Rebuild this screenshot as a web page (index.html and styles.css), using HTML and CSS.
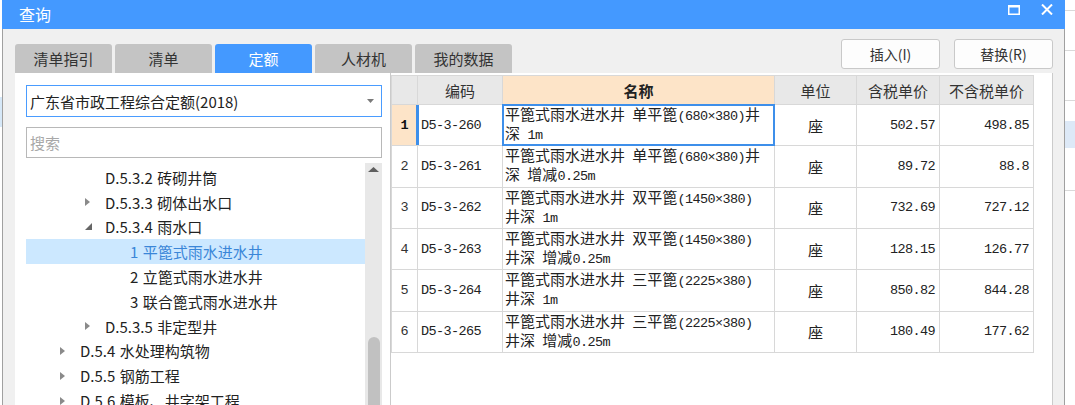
FILE: index.html
```html
<!DOCTYPE html>
<html lang="zh-CN">
<head>
<meta charset="utf-8">
<title>查询</title>
<link rel="stylesheet" href="styles.css">
</head>
<body>
<div class="desk-left"><div class="desk-band"></div></div>
<div class="window">
  <div class="titlebar">
    <div class="title">查询</div>
    <div class="win-ctrls">
      <svg class="ic-max" width="12" height="10" viewBox="0 0 12 10"><path d="M0 0H12V10H0Z M1.5 2.5V8.5H10.5V2.5Z" fill="#fff" fill-rule="evenodd"/></svg>
      <svg class="ic-close" width="12" height="11" viewBox="0 0 12 11"><path d="M1 0.5L11 10.5M11 0.5L1 10.5" stroke="#fff" stroke-width="2" fill="none"/></svg>
    </div>
  </div>
  <div class="frame-body">
    <div class="topbar">
      <div class="tabs">
        <div class="tab">清单指引</div>
        <div class="tab">清单</div>
        <div class="tab active">定额</div>
        <div class="tab">人材机</div>
        <div class="tab">我的数据</div>
      </div>
      <div class="actions">
        <button class="btn">插入(I)</button>
        <button class="btn">替换(R)</button>
      </div>
    </div>
    <div class="main">
      <div class="left">
        <div class="combo">
          <span>广东省市政工程综合定额(2018)</span>
          <svg class="combo-arrow" width="7" height="4" viewBox="0 0 7 4"><path d="M0 0H7L3.5 4Z" fill="#7a7a7a"/></svg>
        </div>
        <div class="search">搜索</div>
        <div class="tree-wrap">
          <div class="tree">
            <div class="node l2"><span class="arrow"></span>D.5.3.2 砖砌井筒</div>
            <div class="node l2"><span class="arrow"><svg width="5" height="8" viewBox="0 0 5 8"><path d="M0 0L5 4L0 8Z" fill="#8a8a8a"/></svg></span>D.5.3.3 砌体出水口</div>
            <div class="node l2"><span class="arrow"><svg width="7" height="7" viewBox="0 0 7 7"><path d="M7 0V7H0Z" fill="#666"/></svg></span>D.5.3.4 雨水口</div>
            <div class="node l3 selected"><span class="arrow"></span>1 平篦式雨水进水井</div>
            <div class="node l3"><span class="arrow"></span>2 立篦式雨水进水井</div>
            <div class="node l3"><span class="arrow"></span>3 联合篦式雨水进水井</div>
            <div class="node l2"><span class="arrow"><svg width="5" height="8" viewBox="0 0 5 8"><path d="M0 0L5 4L0 8Z" fill="#8a8a8a"/></svg></span>D.5.3.5 非定型井</div>
            <div class="node l1"><span class="arrow"><svg width="5" height="8" viewBox="0 0 5 8"><path d="M0 0L5 4L0 8Z" fill="#8a8a8a"/></svg></span>D.5.4 水处理构筑物</div>
            <div class="node l1"><span class="arrow"><svg width="5" height="8" viewBox="0 0 5 8"><path d="M0 0L5 4L0 8Z" fill="#8a8a8a"/></svg></span>D.5.5 钢筋工程</div>
            <div class="node l1"><span class="arrow"><svg width="5" height="8" viewBox="0 0 5 8"><path d="M0 0L5 4L0 8Z" fill="#8a8a8a"/></svg></span>D.5.6 模板、井字架工程</div>
          </div>
          <div class="scroll">
            <svg class="scroll-up" width="11" height="5" viewBox="0 0 11 5"><path d="M0 5L5.5 0L11 5Z" fill="#5f5f5f"/></svg>
            <div class="thumb"></div>
          </div>
        </div>
      </div>
      <div class="grid-panel">
        <div class="grid">
          <div class="c h"></div>
          <div class="c h">编码</div>
          <div class="c h hname">名称</div>
          <div class="c h">单位</div>
          <div class="c h">含税单价</div>
          <div class="c h">不含税单价</div>

          <div class="c num cur">1</div>
          <div class="c code sel">D5-3-260</div>
          <div class="c name focus"><div>平篦式雨水进水井 单平篦<span class="m">(680×380)</span>井<br>深 <span class="m">1m</span></div></div>
          <div class="c unit">座</div>
          <div class="c price">502.57</div>
          <div class="c price">498.85</div>

          <div class="c num">2</div>
          <div class="c code">D5-3-261</div>
          <div class="c name"><div>平篦式雨水进水井 单平篦<span class="m">(680×380)</span>井<br>深 增减<span class="m">0.25m</span></div></div>
          <div class="c unit">座</div>
          <div class="c price">89.72</div>
          <div class="c price">88.8</div>

          <div class="c num">3</div>
          <div class="c code">D5-3-262</div>
          <div class="c name"><div>平篦式雨水进水井 双平篦<span class="m">(1450×380)</span><br>井深 <span class="m">1m</span></div></div>
          <div class="c unit">座</div>
          <div class="c price">732.69</div>
          <div class="c price">727.12</div>

          <div class="c num">4</div>
          <div class="c code">D5-3-263</div>
          <div class="c name"><div>平篦式雨水进水井 双平篦<span class="m">(1450×380)</span><br>井深 增减<span class="m">0.25m</span></div></div>
          <div class="c unit">座</div>
          <div class="c price">128.15</div>
          <div class="c price">126.77</div>

          <div class="c num">5</div>
          <div class="c code">D5-3-264</div>
          <div class="c name"><div>平篦式雨水进水井 三平篦<span class="m">(2225×380)</span><br>井深 <span class="m">1m</span></div></div>
          <div class="c unit">座</div>
          <div class="c price">850.82</div>
          <div class="c price">844.28</div>

          <div class="c num">6</div>
          <div class="c code">D5-3-265</div>
          <div class="c name"><div>平篦式雨水进水井 三平篦<span class="m">(2225×380)</span><br>井深 增减<span class="m">0.25m</span></div></div>
          <div class="c unit">座</div>
          <div class="c price">180.49</div>
          <div class="c price">177.62</div>
        </div>
      </div>
    </div>
  </div>
</div>
<div class="desk-right">
  <div class="dr dr1"></div>
  <div class="dr dr2"></div>
  <div class="dr dr3"></div>
  <div class="dr dr4"></div>
  <div class="dr dr5"></div>
  <div class="dr dr6"></div>
</div>
</body>
</html>
```

FILE: styles.css
```css
* { box-sizing: border-box; }
html, body { margin: 0; padding: 0; }
body {
  width: 1075px;
  height: 405px;
  overflow: hidden;
  display: flex;
  background: #fff;
  font-family: "Noto Sans CJK SC", "Microsoft YaHei", sans-serif;
  color: #222;
}

/* desktop behind the dialog */
.desk-left { width: 2px; flex: none; }
.desk-band { margin-top: 97px; height: 30px; background: #d6e8f8; }
.desk-right { flex: 1; display: flex; flex-direction: column; }
.dr { border-bottom: 1px solid #d9d9d9; }
.dr1 { height: 11px; }
.dr2 { height: 40px; }
.dr3 { height: 50px; }
.dr4 { height: 20px; border-bottom: none; }
.dr5 { height: 27px; background: #dde9f7; border-bottom: none; }
.dr6 { height: 43px; }

/* window */
.window { width: 1063px; flex: none; display: flex; flex-direction: column; height: 405px; }
.titlebar {
  height: 29px;
  flex: none;
  background: #4499ff;
  display: flex;
  align-items: flex-start;
  color: #fff;
}
.title { font-size: 16px; line-height: 28px; padding-left: 17px; }
.win-ctrls { margin-left: auto; display: flex; align-items: flex-start; gap: 21px; padding: 5px 12px 0 0; }
.ic-close { margin-top: -1px; }

.frame-body {
  flex: 1;
  min-height: 0;
  background: #f0f0f0;
  border-left: 1px solid #a0a0a0;
  border-right: 1px solid #a0a0a0;
  padding: 0 11px 0 12px;
  display: flex;
  flex-direction: column;
}
.topbar { height: 44px; flex: none; display: flex; }
.tabs { display: flex; gap: 3px; align-self: flex-end; }
.tab {
  width: 97px;
  height: 29px;
  background: #c4c4c4;
  border-radius: 3px 3px 0 0;
  font-size: 15px;
  line-height: 29px;
  text-align: center;
  color: #333;
}
.tab.active { background: #4499ff; color: #fff; }
.actions { margin-left: auto; display: flex; gap: 14px; padding-top: 10px; align-self: flex-start; }
.btn {
  width: 99px;
  height: 30px;
  padding: 0;
  background: #fdfdfd;
  border: 1px solid #c9c9c9;
  border-radius: 3px;
  font-family: "Noto Sans CJK SC", sans-serif;
  font-size: 14px;
  line-height: 28px;
  color: #333;
  text-align: center;
}

.main { flex: 1; min-height: 0; display: flex; }

/* left panel */
.left {
  width: 375px;
  flex: none;
  background: #fff;
  padding: 12px 8px 0 11px;
  display: flex;
  flex-direction: column;
  min-height: 0;
}
.combo {
  height: 32px;
  flex: none;
  border: 1px solid #4a9cff;
  display: flex;
  align-items: center;
  padding: 0 7px 0 3px;
  font-size: 15px;
  color: #222;
}
.combo-arrow { margin-left: auto; }
.search {
  margin-top: 10px;
  height: 31px;
  flex: none;
  border: 1px solid #b8b8b8;
  padding-left: 3px;
  font-size: 15px;
  line-height: 29px;
  color: #a8a8a8;
}
.tree-wrap { margin-top: 5px; flex: 1; min-height: 0; display: flex; }
.tree { flex: 1; padding-top: 2px; overflow: hidden; }
.node {
  height: 24.8px;
  display: flex;
  align-items: center;
  white-space: nowrap;
  font-size: 15px;
  word-spacing: 1px;
  color: #222;
}
.arrow { width: 20px; flex: none; display: flex; align-items: center; }
.l1 { padding-left: 34px; }
.l2 { padding-left: 59px; }
.l3 { padding-left: 84px; }
.node.selected { background: #cce8ff; color: #3a86d8; }

.scroll {
  width: 17px;
  flex: none;
  background: #e8e8e8;
  display: flex;
  flex-direction: column;
  align-items: center;
  padding-top: 4px;
  overflow: hidden;
}
.scroll-up { flex: none; }
.thumb {
  margin-top: 165px;
  width: 12px;
  height: 100px;
  flex: none;
  background: #c1c1c1;
  border-radius: 6px 6px 0 0;
}

/* grid panel */
.grid-panel {
  flex: 1;
  min-width: 0;
  background: #fff;
  border-left: 1px solid #cbcbcb;
  border-right: 1px solid #cbcbcb;
  padding-top: 2px;
}
.grid {
  width: 643px;
  display: grid;
  grid-template-columns: 25px 84px 271px 81px 82px 93px;
  grid-template-rows: 28px repeat(6, 40.33px);
  gap: 1px;
  background: #d8d8d8;
  border: 1px solid #d8d8d8;
}
.c { background: #fff; display: flex; align-items: center; white-space: nowrap; }
.h { background: #e8e8e8; justify-content: center; font-size: 15px; color: #333; }
.h.hname { background: #fde4c8; font-weight: bold; color: #222; }
.num {
  justify-content: center;
  font-family: "Liberation Mono", monospace;
  font-size: 13.5px;
  color: #333;
}
.num.cur { background: #fde4c8; font-weight: bold; color: #111; }
.code {
  padding-left: 3px;
  font-family: "Liberation Mono", monospace;
  font-size: 13.5px;
  letter-spacing: -0.6px;
  color: #222;
}
.code.sel { box-shadow: -2px 0 0 #3e8fea, inset 1px 0 0 #3e8fea; }
.name { padding-left: 2px; font-size: 15px; line-height: 16px; word-spacing: 4px; color: #222; }
.name.focus { outline: 2px solid #3e8fea; outline-offset: -1px; }
.m { font-family: "Liberation Mono", monospace; font-size: 13.5px; letter-spacing: -0.6px; word-spacing: 0; }
.unit { justify-content: center; font-size: 15px; color: #222; }
.price {
  justify-content: flex-end;
  padding-right: 4px;
  font-family: "Liberation Mono", monospace;
  font-size: 13.5px;
  letter-spacing: -0.6px;
  color: #222;
}
```
